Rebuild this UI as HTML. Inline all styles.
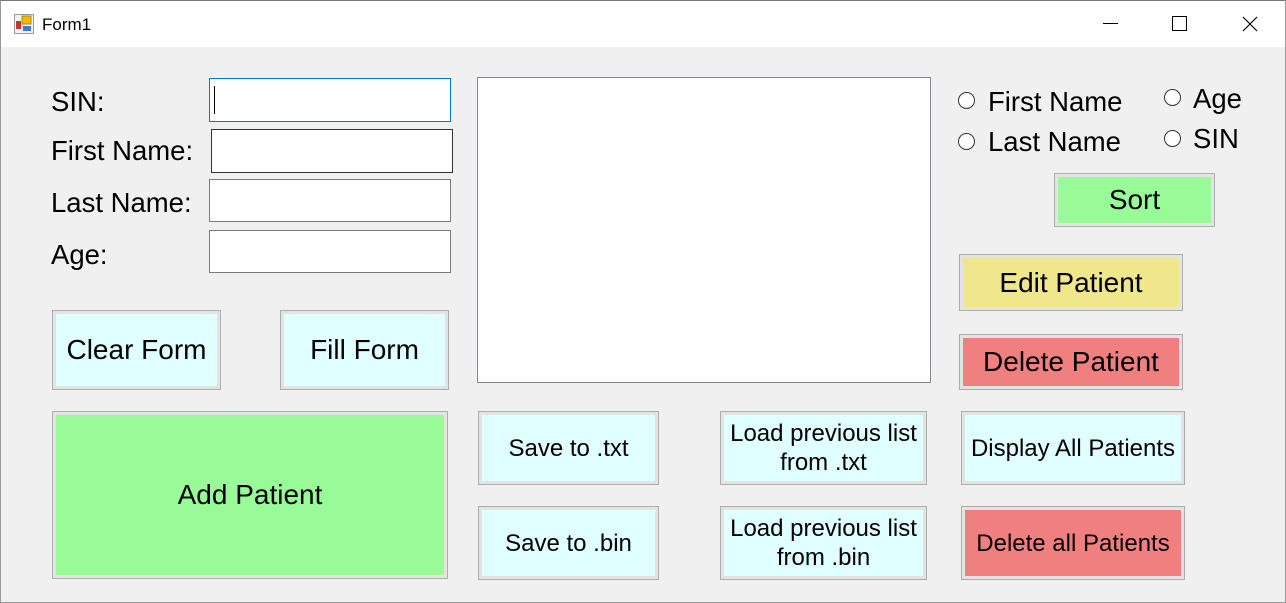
<!DOCTYPE html>
<html><head><style>
*{box-sizing:border-box;margin:0;padding:0}
body{width:1286px;height:603px;background:#f0f0f0;font-family:"Liberation Sans",Arial,sans-serif;position:relative;overflow:hidden;color:#000}
.tb{position:absolute;left:0;top:0;width:1286px;height:47px;background:#fff;border-top:1px solid #777;border-left:1px solid #999;border-right:1px solid #999}
.win{position:absolute;left:0;top:47px;width:1286px;height:556px;border-left:1px solid #999;border-right:1px solid #999;border-bottom:1px solid #999}
.a{position:absolute}
.lbl{position:absolute;font-size:27.5px;line-height:30px;white-space:nowrap}
.tx{position:absolute;background:#fff;border:1px solid #7a7a7a}
.btn{position:absolute;border:1px solid #adadad;display:flex;align-items:center;justify-content:center;text-align:center;box-shadow:inset 0 0 0 3px #e3e3e3;font-size:28px;line-height:30px;white-space:nowrap}
.sm{font-size:24px;line-height:29px}
.cy{background:#e0ffff}
.rd{position:absolute;width:17px;height:17px;border:1.5px solid #333;border-radius:50%;background:#fff}
</style></head><body>
<div class="tb"></div>
<div class="win"></div>
<svg class="a" style="left:14px;top:14px" width="20" height="20" viewBox="0 0 20 20">
<rect x="0.5" y="0.5" width="19" height="19" fill="#f4f4f4" stroke="#999"/>
<rect x="2" y="7" width="5" height="8" fill="#c0392b"/>
<rect x="8" y="2" width="9" height="8" fill="#f5b800" stroke="#b38600"/>
<rect x="9" y="12" width="8" height="5" fill="#3a7bd5"/>
</svg>
<div class="a" style="left:42px;top:15px;font-size:17px">Form1</div>
<div class="a" style="left:1103px;top:23px;width:15px;height:1px;background:#000"></div>
<div class="a" style="left:1172px;top:16px;width:15px;height:15px;border:1px solid #000"></div>
<svg class="a" style="left:1242px;top:16px" width="16" height="16"><path d="M1 1L15 15M15 1L1 15" stroke="#000" stroke-width="1.2"/></svg>

<div class="lbl" style="left:51px;top:87px">SIN:</div>
<div class="lbl" style="left:51px;top:136px">First Name:</div>
<div class="lbl" style="left:51px;top:188px">Last Name:</div>
<div class="lbl" style="left:51px;top:240px">Age:</div>

<div class="tx" style="left:209px;top:78px;width:242px;height:44px;border-color:#0078d7"></div>
<div class="a" style="left:214px;top:86px;width:1px;height:28px;background:#000"></div>
<div class="tx" style="left:211px;top:129px;width:242px;height:44px;border-color:#333"></div>
<div class="tx" style="left:209px;top:179px;width:242px;height:43px"></div>
<div class="tx" style="left:209px;top:230px;width:242px;height:43px"></div>

<div class="tx" style="left:477px;top:77px;width:454px;height:306px;border-color:#828790"></div>

<div class="btn cy" style="left:52px;top:310px;width:169px;height:80px">Clear Form</div>
<div class="btn cy" style="left:280px;top:310px;width:169px;height:80px">Fill Form</div>
<div class="btn" style="left:52px;top:411px;width:396px;height:168px;background:#98fb98">Add Patient</div>

<div class="btn cy sm" style="left:478px;top:411px;width:181px;height:74px">Save to .txt</div>
<div class="btn cy sm" style="left:478px;top:506px;width:181px;height:74px">Save to .bin</div>
<div class="btn cy sm" style="left:720px;top:411px;width:207px;height:74px">Load previous list<br>from .txt</div>
<div class="btn cy sm" style="left:720px;top:506px;width:207px;height:74px">Load previous list<br>from .bin</div>
<div class="btn cy sm" style="left:961px;top:411px;width:224px;height:74px">Display All Patients</div>
<div class="btn sm" style="left:961px;top:506px;width:224px;height:74px;background:#f08080">Delete all Patients</div>

<div class="btn" style="left:1054px;top:173px;width:161px;height:54px;background:#98fb98">Sort</div>
<div class="btn" style="left:959px;top:254px;width:224px;height:57px;background:#f0e68c">Edit Patient</div>
<div class="btn" style="left:959px;top:334px;width:224px;height:56px;background:#f08080">Delete Patient</div>

<div class="rd" style="left:958px;top:92px"></div>
<div class="lbl" style="left:988px;top:87px">First Name</div>
<div class="rd" style="left:958px;top:133px"></div>
<div class="lbl" style="left:988px;top:127px">Last Name</div>
<div class="rd" style="left:1164px;top:89px"></div>
<div class="lbl" style="left:1193px;top:84px">Age</div>
<div class="rd" style="left:1164px;top:130px"></div>
<div class="lbl" style="left:1193px;top:124px">SIN</div>
</body></html>
